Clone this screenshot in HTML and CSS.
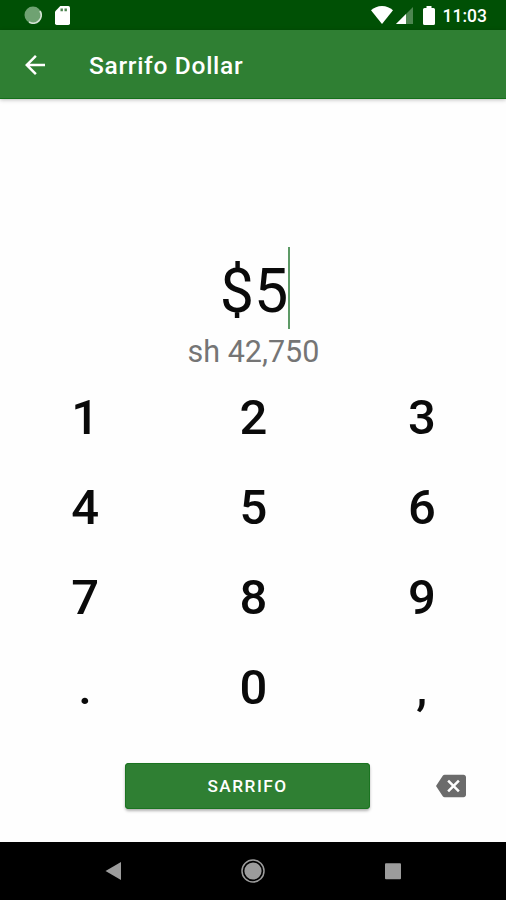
FILE: index.html
```
<!DOCTYPE html>
<html lang="en">
<head>
  <meta charset="UTF-8" />
  <meta name="viewport" content="width=device-width, initial-scale=1.0"/>
  <title>Sarrifo Dollar</title>
  <link rel="stylesheet" href="styles.css">
</head>
<body>
  <div class="screen">
    <div class="status-bar">
      <svg class="status-sync" viewBox="0 0 18 18">
        <circle cx="9" cy="9" r="8.5" fill="#6fa272"/>
        <path d="M16 5a8 8 0 0 1-11 11" fill="none" stroke="#d3e3d4" stroke-width="1.8"/>
      </svg>
      <svg class="status-card" viewBox="0 0 15 19">
        <path d="M5.3 0H13.3a1.7 1.7 0 0 1 1.7 1.7V17.3a1.7 1.7 0 0 1-1.7 1.7H1.7A1.7 1.7 0 0 1 0 17.3V5.5z" fill="#fff"/>
        <path d="M5.5 2.5h2.4v2.800H5.5zM9.5 2.5h2.4v2.800H9.5z" fill="#4c834f"/>
      </svg>
      <div class="status-right">
        <svg class="status-wifi" viewBox="0 0 22 18">
          <path d="M11 18L0 4.3C3 1.7 6.7 0 11 0s8 1.7 11 4.3z" fill="#fff"/>
        </svg>
        <svg class="status-signal" viewBox="0 0 17 17">
          <path d="M0 17L17 0v17z" fill="#4d8650"/>
          <path d="M0 17L10 7v10z" fill="#fff"/>
        </svg>
        <svg class="status-battery" viewBox="0 0 12 19">
          <path d="M3.5 0h5v2h2A1.5 1.5 0 0 1 12 3.5v14a1.5 1.5 0 0 1-1.5 1.5h-9A1.5 1.5 0 0 1 0 17.5v-14A1.5 1.5 0 0 1 1.5 2h2z" fill="#fff"/>
        </svg>
        <span class="clock">11:03</span>
      </div>
    </div>

    <header class="app-bar">
      <svg class="back-icon" viewBox="0 0 24 24">
        <path d="M20 11H7.83l5.59-5.59L12 4l-8 8 8 8 1.41-1.41L7.83 13H20v-2z" fill="#fff"/>
      </svg>
      <h1>Sarrifo Dollar</h1>
    </header>

    <main class="content">
      <div class="amount"><span class="amount-value">$5</span><span class="cursor"></span></div>
      <p class="converted">sh 42,750</p>

      <div class="keypad">
        <button>1</button>
        <button>2</button>
        <button>3</button>
        <button>4</button>
        <button>5</button>
        <button>6</button>
        <button>7</button>
        <button>8</button>
        <button>9</button>
        <button>.</button>
        <button>0</button>
        <button>,</button>
      </div>

      <div class="actions">
        <button class="submit-btn">SARRIFO</button>
        <button class="delete-btn" aria-label="Delete">
          <svg viewBox="0 0 24 24">
            <path d="M22 3H7c-.69 0-1.23.35-1.59.88L0 12l5.41 8.11c.36.53.9.89 1.59.89h15c1.1 0 2-.9 2-2V5c0-1.1-.9-2-2-2zm-3 12.59L17.59 17 14 13.41 10.41 17 9 15.59 12.59 12 9 8.41 10.41 7 14 10.59 17.59 7 19 8.41 15.41 12 19 15.59z" fill="#6b6b6b"/>
          </svg>
        </button>
      </div>
    </main>

    <nav class="nav-bar">
      <svg viewBox="0 0 24 24">
        <path d="M4.5 12L20 3v18z" fill="#9c9c9c"/>
      </svg>
      <svg viewBox="0 0 24 24">
        <circle cx="12" cy="12" r="11" fill="none" stroke="#9c9c9c" stroke-width="1.5"/>
        <circle cx="12" cy="12" r="8.6" fill="#9c9c9c"/>
      </svg>
      <svg viewBox="0 0 24 24">
        <rect x="4" y="4.3" width="16" height="16" rx="1" fill="#9c9c9c"/>
      </svg>
    </nav>
  </div>
</body>
</html>
```
FILE: styles.css
```
:root {
  --primary-color: #2f7f33;
  --primary-dark: #005005;
}

* {
  box-sizing: border-box;
}

body {
  font-family: Roboto, sans-serif;
  margin: 0;
  background: #fefefe;
}

button {
  font-family: inherit;
  padding: 0;
  border: none;
  background: none;
  cursor: pointer;
}

.screen {
  display: flex;
  flex-direction: column;
  height: 900px;
  overflow: hidden;
}

/* Status bar */
.status-bar {
  display: flex;
  align-items: center;
  height: 30px;
  padding: 0 19px 0 24px;
  background: var(--primary-dark);
}

.status-sync {
  width: 18px;
  height: 18px;
}

.status-card {
  width: 15px;
  height: 19px;
  margin-left: 13px;
}

.status-right {
  display: flex;
  align-items: center;
  margin-left: auto;
}

.status-wifi {
  width: 22px;
  height: 18px;
}

.status-signal {
  width: 17px;
  height: 17px;
  margin: 1px 0 0 3px;
}

.status-battery {
  width: 12px;
  height: 19px;
  margin-left: 10px;
}

.clock {
  margin-left: 8px;
  padding-top: 2px;
  color: #fff;
  font-size: 17.5px;
  font-weight: 500;
}

/* App bar */
.app-bar {
  display: flex;
  align-items: center;
  height: 69px;
  flex: none;
  padding: 2px 20px 0;
  background: var(--primary-color);
  border-bottom: 1px solid #14701a;
  box-shadow: 0 1px 4px rgba(0,0,0,0.25);
}

.back-icon {
  width: 30px;
  height: 30px;
}

h1 {
  margin: 0 0 0 39px;
  color: #fff;
  font-size: 24.5px;
  font-weight: 500;
  letter-spacing: 0.7px;
}

/* Amount */
.content {
  flex: 1;
  padding-top: 148px;
}

.amount {
  display: flex;
  justify-content: center;
  height: 82px;
  padding-left: 4px;
}

.amount-value {
  color: #0a0a0a;
  font-size: 61px;
  line-height: 88px;
}

.cursor {
  width: 2px;
  background: #5d9a66;
}

.converted {
  margin: 4px 0 0;
  padding-left: 1px;
  color: #757575;
  font-size: 30.5px;
  line-height: 38px;
  text-align: center;
}

/* Keypad */
.keypad {
  display: grid;
  grid-template-columns: repeat(3, 1fr);
  grid-auto-rows: 90px;
  margin-top: 1px;
  padding-left: 1px;
}

.keypad button {
  color: #0a0a0a;
  font-size: 49px;
  font-weight: 500;
}

.actions {
  display: flex;
  align-items: center;
  justify-content: space-between;
  margin-top: 31px;
  padding: 0 40px 0 125px;
}

.submit-btn {
  width: 245px;
  height: 46px;
  border-radius: 4px;
  background: var(--primary-color);
  box-shadow: inset 0 0 0 1px #1b7421, 0 2px 3px rgba(0,0,0,0.3);
  color: #fff;
  font-size: 17.2px;
  font-weight: 500;
  letter-spacing: 1.5px;
}

.delete-btn svg {
  display: block;
  width: 30px;
  height: 30px;
}

/* Navigation bar */
.nav-bar {
  display: flex;
  align-items: center;
  justify-content: space-between;
  height: 58px;
  padding: 0 101px;
  background: #000;
}

.nav-bar svg {
  width: 24px;
  height: 24px;
}
```
